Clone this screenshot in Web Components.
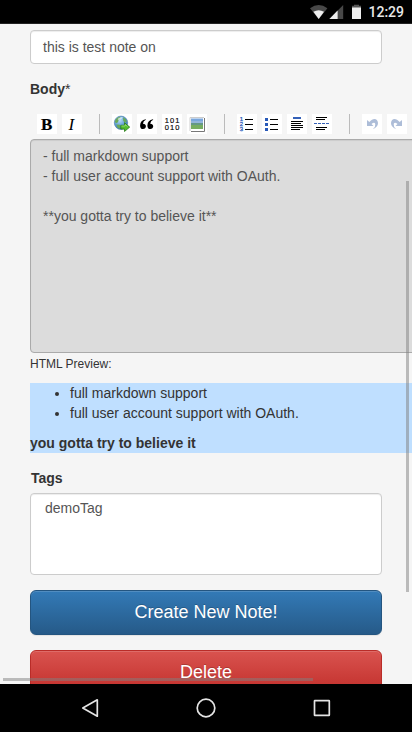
<!DOCTYPE html>
<html lang="en">
<head>
<meta charset="utf-8">
<title>Note editor</title>
<style>
html,body{margin:0;height:732px;overflow:hidden;background:#000}
body{font:14px/20px "Liberation Sans",Arial,sans-serif;color:#333}
</style>
</head>
<body>
<note-screen></note-screen>
<script>
function define(name, html) {
  const t = document.createElement('template');
  t.innerHTML = html;
  customElements.define(name, class extends HTMLElement {
    constructor() {
      super();
      this.attachShadow({mode: 'open'}).appendChild(t.content.cloneNode(true));
    }
  });
}

define('status-bar', `
<style>:host{display:flex;box-sizing:border-box;height:24px;background:#000;border-bottom:1px solid #222;color:#e8e8e8;font:500 14px/24px Roboto,sans-serif;justify-content:flex-end;padding-right:8px}
svg{display:block;margin-right:6px}span{line-height:25px}</style>
<svg width="54" height="23" viewBox="0 0 54 23">
<path d="M2 8.2Q10.7 1.8 19.4 8.2L10.7 18.9Z" fill="#484848"/>
<path d="M5.4 11.8Q10.7 8.6 16 11.8L10.7 18.9Z" fill="#eee"/>
<path d="M35.2 5V19H21.4Z" fill="#484848"/><path d="M29.6 10.6V19H21.4Z" fill="#eee"/>
<path d="M46 4.8h5v1h2V8h-9V5.800h2z" fill="#555"/><path d="M44 7.500h9V19h-9z" fill="#eee"/>
</svg><span>12:29</span>`);

define('nav-bar', `
<style>:host{display:flex;height:48px;background:#000}svg{display:block}</style>
<svg width="412" height="48" viewBox="0 0 412 48" fill="none" stroke="#e4e4e4" stroke-width="1.700" stroke-linejoin="round">
<path d="M97.300 15.800V32.200L82.800 24Z"/><circle cx="206" cy="24" r="8.800"/><rect x="314.500" y="16.600" width="14.800" height="14.800" rx=".4"/></svg>`);

define('text-field', `<style>:host{display:block;box-sizing:border-box;background:#fff;border:1px solid #ccc;border-radius:4px;padding:6px 12px;color:#555;box-shadow:inset 0 1px 1px rgba(0,0,0,.075);white-space:pre}
:host([kind=line]){height:34px}
:host([kind=editor]){width:500px;height:214px;background:#dcdcdc;border-color:#aaa;color:#555}
:host([kind=tags]){height:82px;padding:4px 14px}
</style><slot></slot>`);

define('field-label', `<style>:host{display:block;font-weight:700;height:20px}</style><slot></slot>`);

define('action-button', `
<style>:host{display:block;box-sizing:border-box;height:45px;border:1px solid #245580;border-radius:6px;background:linear-gradient(#337ab7,#265a88);color:#fff;text-align:center;font-size:18px;line-height:42px;text-shadow:0 -1px 0 rgba(0,0,0,.2);box-shadow:inset 0 1px 0 rgba(255,255,255,.15),0 1px 1px rgba(0,0,0,.075)}
:host([kind=danger]){border-color:#b92c28;background:linear-gradient(#d9534f,#c12e2a)}</style><slot></slot>`);

define('tool-button', `<style>:host{display:block;width:20px;height:20px;background:#fff;flex:none}</style><slot></slot>`);
define('tool-divider', `<style>:host{display:block;width:1px;height:20px;background:#bbb;margin:0 7px 0 12px;flex:none}</style>`);

define('editor-toolbar', `
<style>:host{display:flex;gap:5px;height:20px;padding-left:7px}
tool-divider{margin:0 7px 0 12px}svg{display:block;width:20px;height:20px}</style>
<tool-button><svg viewBox="0 0 20 20"><text x="4" y="15.500" font-family="Liberation Serif,serif" font-weight="700" font-size="17" fill="#000" stroke="#000" stroke-width=".2">B</text></svg></tool-button>
<tool-button><svg viewBox="0 0 20 20"><text x="6.500" y="15.500" font-family="Liberation Serif,serif" font-style="italic" font-size="17" fill="#000">I</text></svg></tool-button>
<tool-divider></tool-divider>
<tool-button><svg viewBox="0 0 20 20">
<defs><radialGradient id="g" cx=".4" cy=".3" r=".75"><stop offset="0" stop-color="#b9dcf5"/><stop offset=".6" stop-color="#5b9bd2"/><stop offset="1" stop-color="#2b65a8"/></radialGradient></defs>
<circle cx="9" cy="8.800" r="6.700" fill="url(#g)" stroke="#4478a8" stroke-width=".6"/>
<path d="M3.300 6Q5 3 8 2.800L8.800 4.400 6.600 6 6 8.200 4 9.200 2.900 8ZM11 3.200L14 5.200 14.800 8 12.600 8.600 11.200 6.800ZM4.300 10.400L7.600 10.800 8.600 12.600 7.300 15Q4.500 13.500 4.300 10.400Z" fill="#69a95a"/>
<path d="M5.500 5Q8 2.700 11 3.600Q9.500 5.500 6.500 6Z" fill="#e7f5fc" opacity=".75"/>
<path d="M8.800 11.300H12.500V8.700L17.700 13.100 12.500 17.500V15H8.800Z" fill="#52bd2d" stroke="#287b19" stroke-width=".8"/><path d="M9.400 12H13.200V10.600L15.600 12.700" fill="none" stroke="#a3e27c" stroke-width=".8"/></svg></tool-button>
<tool-button><svg viewBox="0 0 20 20"><path d="M8.700 5.200Q3.300 6 3.100 11.400C3 13.800 4.200 15 6 15S8.900 13.700 8.900 12.200 7.600 9.700 5.900 9.800Q6.300 7 8.900 5.800Z"/><path d="M8.700 5.200Q3.300 6 3.100 11.400C3 13.800 4.200 15 6 15S8.900 13.700 8.900 12.200 7.600 9.700 5.900 9.800Q6.300 7 8.900 5.800Z" transform="translate(7.300)"/></svg></tool-button>
<tool-button><svg viewBox="0 0 20 20" font-family="Liberation Sans,sans-serif" font-size="7.500" fill="#000" stroke="#000" stroke-width=".15"><text x="2.700" y="8.500" textLength="14.600">101</text><text x="2.700" y="16.200" textLength="14.600">010</text></svg></tool-button>
<tool-button><svg viewBox="0 0 20 20"><path d="M4 17.500H17.500V4" fill="none" stroke="#777"/><path d="M3 17V3.500H17" fill="none" stroke="#ccc"/><path d="M4 4H16.500V16.500H4Z" fill="#fff"/><path d="M4 4.500H16V9H4Z" fill="#79a6dc"/><path d="M4 7H16V9H4Z" fill="#93b5dc"/><path d="M4 9H16V15H4Z" fill="#77ad61"/><path d="M4 9H16V11H4Z" fill="#659886"/></svg></tool-button>
<tool-divider></tool-divider>
<tool-button><svg viewBox="0 0 20 20"><path d="M8 5.500H16M8 10.500H16M8 15.500H16" stroke="#000"/><g font-family="Liberation Sans,sans-serif" font-size="6" fill="#2859b8" stroke="#2859b8" stroke-width=".25"><text x="2.700" y="7.300">1</text><text x="2.700" y="12.100">2</text><text x="2.700" y="16.900">3</text></g></svg></tool-button>
<tool-button><svg viewBox="0 0 20 20"><path d="M8 5.500H16M8 10.500H16M8 15.500H16" stroke="#000"/><path d="M3 4h3v3H3zM3 9h3v3H3zM3 14h3v3H3z" fill="#2859b8"/></svg></tool-button>
<tool-button><svg viewBox="0 0 20 20"><path d="M6 3h8v2H6z" fill="#3561b8"/><path d="M4 7.500H16M4 9.500H14M4 11.500H16M4 13.500H16M4 15.500H13" stroke="#000"/></svg></tool-button>
<tool-button><svg viewBox="0 0 20 20"><path d="M4 3.500H15M4 5.500H13M4 13.500H15M4 15.500H13" stroke="#000"/><path d="M2 9.500H17" stroke="#3561b8" stroke-dasharray="3 1"/></svg></tool-button>
<tool-divider></tool-divider>
<tool-button><svg viewBox="0 0 20 20"><path d="M5 6L5 12H11.500L9.500 10Q12.500 7.500 13.300 10Q13.800 12.500 10.800 15.200Q16 13 16 9C15.600 4.200 11 3.700 7.400 8Z" fill="#adbdd8"/></svg></tool-button>
<tool-button><svg viewBox="0 0 20 20"><path transform="translate(20 0) scale(-1 1)" d="M5 6L5 12H11.500L9.500 10Q12.500 7.500 13.300 10Q13.800 12.500 10.800 15.200Q16 13 16 9C15.600 4.200 11 3.700 7.400 8Z" fill="#adbdd8"/></svg></tool-button>`);

define('markdown-preview', `
<style>:host{display:block;width:500px;height:70px;background:#bfdfff}
ul{margin:0 0 10px;padding-left:40px}p{margin:0;font-weight:700}</style>
<ul><li>full markdown support</li><li>full user account support with OAuth.</li></ul><p>you gotta try to believe it</p>`);

define('scroll-thumb', `
<style>:host{position:absolute;background:rgba(128,128,128,.5);left:3px;top:654px;width:310px;height:3px}
:host([axis=y]){left:406px;top:157px;width:3px;height:411px}</style>`);

define('note-screen', `
<style>:host{display:flex;flex-direction:column;width:412px;height:732px;overflow:hidden}
main{position:relative;box-sizing:border-box;height:660px;background:#f5f5f5;padding:6px 30px 0;overflow:hidden}
.body{margin:15px 0}editor-toolbar{margin-bottom:5px}.star{font-weight:400}
small{display:block;font-size:12px;line-height:20px;height:20px;margin:1px 0 9px}
.tags{margin:15px 0 5px;padding-left:1px}action-button{margin-top:15px}</style>
<status-bar></status-bar>
<main>
<text-field kind="line">this is test note on</text-field>
<field-label class="body">Body<span class="star">*</span></field-label>
<editor-toolbar></editor-toolbar>
<text-field kind="editor">- full markdown support
- full user account support with OAuth.

**you gotta try to believe it**</text-field>
<small>HTML Preview:</small>
<markdown-preview></markdown-preview>
<field-label class="tags">Tags</field-label>
<text-field kind="tags">demoTag</text-field>
<action-button>Create New Note!</action-button>
<action-button kind="danger">Delete</action-button>
<scroll-thumb axis="y"></scroll-thumb>
<scroll-thumb axis="x"></scroll-thumb>
</main>
<nav-bar></nav-bar>`);
</script>
</body>
</html>
